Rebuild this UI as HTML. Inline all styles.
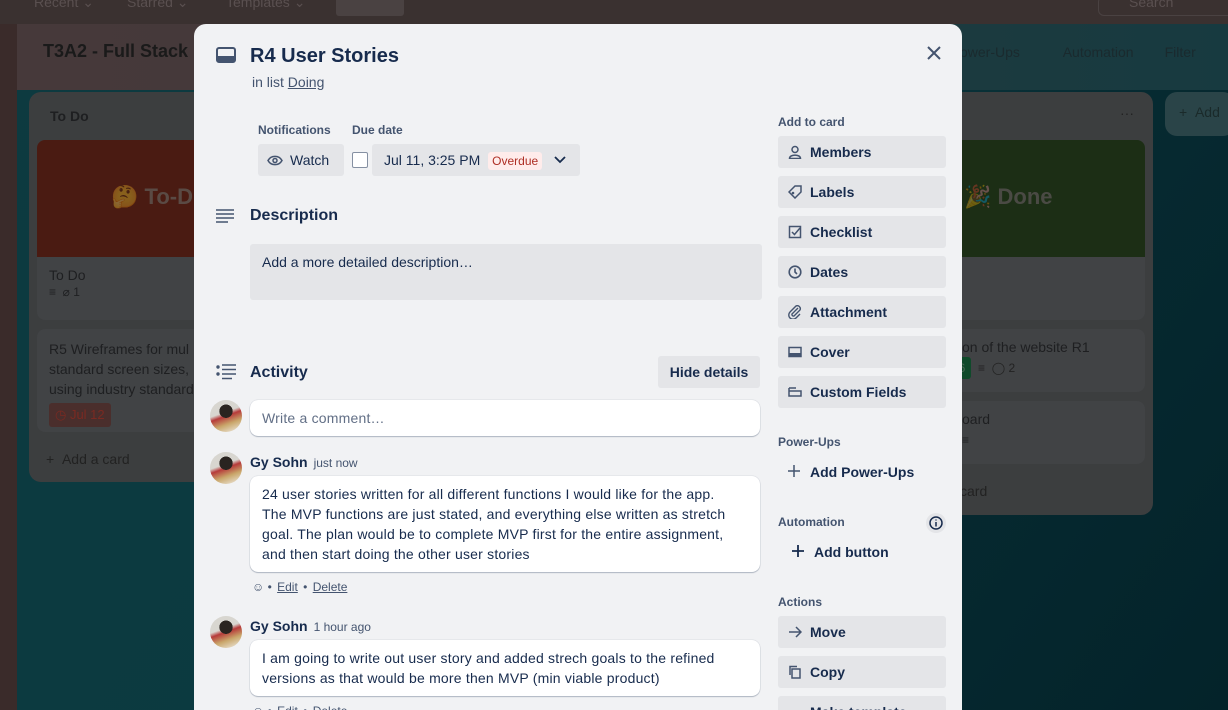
<!DOCTYPE html>
<html><head><meta charset="utf-8"><style>
*{box-sizing:border-box;margin:0;padding:0}
html,body{width:1228px;height:710px;overflow:hidden}
body{position:relative;font-family:"Liberation Sans",sans-serif;background:#06262c}
.a{position:absolute}
.bg{position:absolute;inset:0;background:linear-gradient(125deg,#0d3a40 0%,#0b3a40 45%,#062a31 70%,#04232a 100%)}
.hdr{left:17px;top:24px;width:1211px;height:66px;background:linear-gradient(90deg,#46393a 0%,#43393a 45%,#1e3a3e 65%,#173a40 100%)}
.top{left:0;top:0;width:1228px;height:24px;background:#3a3130;color:#5a5050;font-size:14px}
.side{left:0;top:24px;width:17px;height:686px;background:#3a2b2a}
.list{background:#3c3e3f;border-radius:12px}
.card{background:#414345;border-radius:8px;color:#1e1f21;font-size:14px}
.modal{left:194px;top:24px;width:768px;height:686px;background:#f1f2f4;border-radius:12px 12px 0 0;color:#172b4d;overflow:hidden}
.btn{position:absolute;background:#e4e5e8;border-radius:3px;font-size:14px;font-weight:bold;color:#172b4d;height:32px;line-height:32px}
.sb{left:584px;width:168px;padding-left:32px}
.sb svg{position:absolute;left:10px;top:9px}
.lbl{position:absolute;font-size:12px;font-weight:bold;color:#44546f}
.cm{position:absolute;left:56px;width:510px;background:#fff;border-radius:8px;box-shadow:0 1px 1px #091e4240,0 0 1px #091e424f;font-size:14px;line-height:20px;padding:8px 22px 8px 12px;color:#172b4d;letter-spacing:0.2px}
.av{position:absolute;left:16px;width:32px;height:32px;border-radius:50%;background:radial-gradient(circle at 50% 35%,#2a2420 0 25%,transparent 26%),linear-gradient(160deg,#d8d6d0 0 40%,#b63a3a 50%,#c9a66a 70%,#f2f0ea 100%)}
.nm{position:absolute;left:56px;font-size:14px;font-weight:bold}
.nm span{font-weight:normal;font-size:12px;color:#44546f;margin-left:6px}
.ft{position:absolute;left:58px;font-size:12px;color:#44546f}
.ft u{margin:0 2px}
.dim{opacity:.35}
</style></head><body>
<div class="bg"></div>
<div class="a hdr"></div>
<div class="a top"><span class="a" style="left:34px;top:-6px">Recent ⌄</span><span class="a" style="left:127px;top:-6px">Starred ⌄</span><span class="a" style="left:226px;top:-6px">Templates ⌄</span><div class="a" style="left:336px;top:-4px;width:68px;height:20px;background:#4a4242;border-radius:3px"></div><div class="a" style="left:1098px;top:-4px;width:140px;height:20px;border:1px solid #4a4242;border-radius:6px"><span class="a" style="left:30px;top:-3px;color:#5a5050">Search</span></div></div>
<div class="a side"></div>
<div class="a" style="left:43px;top:41px;font-size:18px;font-weight:bold;color:#1a1a1a">T3A2 - Full Stack</div>
<div class="a" style="left:960px;top:44px;font-size:14px;color:#1a2a2e;white-space:nowrap">ower-Ups &nbsp;&nbsp;&nbsp;&nbsp;&nbsp;&nbsp;&nbsp;&nbsp;&nbsp;&nbsp;Automation &nbsp;&nbsp;&nbsp;&nbsp;&nbsp;&nbsp;&nbsp;Filter</div>
<div class="a list" style="left:29px;top:92px;width:180px;height:390px"></div>
<div class="a" style="left:50px;top:108px;font-size:14px;font-weight:bold;color:#1e1f21">To Do</div>
<div class="a" style="left:37px;top:140px;width:165px;height:180px;background:#414345;border-radius:8px;overflow:hidden"><div style="height:117px;background:#4a1b12;color:#5a4a44;font-size:22px;font-weight:bold;padding:44px 0 0 74px;white-space:nowrap"><span class="dim">🤔</span> To-D</div><div style="padding:10px 12px;color:#1e1f21;font-size:14px">To Do<br><span style="font-size:12px">≡ &nbsp;⌀ 1</span></div></div>
<div class="a card" style="left:37px;top:329px;width:165px;height:103px;padding:10px 12px;line-height:20px;white-space:nowrap;overflow:hidden">R5 Wireframes for mul<br>standard screen sizes,<br>using industry standard<div style="margin-top:4px;width:62px;height:24px;background:#4a2e2c;color:#7a2a22;border-radius:3px;font-size:13px;padding:2px 6px">◷ Jul 12</div></div>
<div class="a" style="left:46px;top:451px;font-size:14px;color:#222">+ &nbsp;Add a card</div>
<div class="a list" style="left:940px;top:92px;width:213px;height:423px"></div>
<div class="a" style="left:1120px;top:105px;color:#222;font-size:14px">···</div>
<div class="a" style="left:940px;top:140px;width:205px;height:180px;background:#414345;border-radius:8px;overflow:hidden"><div style="height:117px;background:#1c2e15;color:#4a4a44;font-size:22px;font-weight:bold;padding:44px 0 0 24px"><span class="dim">🎉</span> Done</div></div>
<div class="a card" style="left:940px;top:329px;width:205px;height:63px;padding:10px 22px">on of the website R1<div style="margin:6px 0 0 -22px;font-size:12px;color:#222"><span style="background:#0f4a2a;color:#4a6a55;padding:4px 6px;border-radius:3px">ul 6</span> &nbsp;≡ &nbsp;◯ 2</div></div>
<div class="a card" style="left:940px;top:401px;width:205px;height:63px;padding:10px 22px">oard<div style="font-size:12px;margin-top:6px">≡</div></div>
<div class="a" style="left:960px;top:483px;font-size:14px;color:#222">card</div>
<div class="a" style="left:1165px;top:92px;width:70px;height:44px;background:#2a4448;border-radius:12px;color:#1a2a2a;font-size:14px;padding:12px 14px">+ &nbsp;Add</div>

<div class="a modal">
<svg class="a" style="left:22px;top:23px" width="20" height="16" viewBox="0 0 20 16"><rect x="1" y="1" width="18" height="14" rx="2" fill="none" stroke="#44546f" stroke-width="2"/><rect x="1" y="9" width="18" height="6" fill="#44546f"/></svg>
<div class="a" style="left:56px;top:21px;font-size:20px;font-weight:bold">R4 User Stories</div>
<div class="a" style="left:58px;top:50px;font-size:14px;color:#44546f">in list <u>Doing</u></div>
<svg class="a" style="left:732px;top:21px" width="16" height="16"><path d="M2 2L14 14M14 2L2 14" stroke="#44546f" stroke-width="2"/></svg>
<div class="lbl" style="left:64px;top:99px">Notifications</div>
<div class="lbl" style="left:158px;top:99px">Due date</div>
<div class="btn" style="left:64px;top:120px;width:86px;padding-left:32px;font-weight:normal">Watch<svg class="a" style="left:9px;top:11px" width="16" height="11"><path d="M1 5.5C4 0 12 0 15 5.5C12 11 4 11 1 5.5Z" fill="none" stroke="#44546f" stroke-width="1.5"/><circle cx="8" cy="5.5" r="2" fill="none" stroke="#44546f" stroke-width="1.5"/></svg></div>
<div class="a" style="left:158px;top:128px;width:16px;height:16px;border:1.5px solid #8590a2;border-radius:2px;background:#fff"></div>
<div class="btn" style="left:178px;top:120px;width:208px;padding-left:12px;font-weight:normal;font-size:14px;color:#172b4d">Jul 11, 3:25 PM <span style="background:#ffeceb;color:#ae2e24;font-size:12px;padding:2px 4px;border-radius:3px;margin-left:4px">Overdue</span><svg class="a" style="left:182px;top:12px" width="12" height="8"><path d="M1 1L6 6L11 1" stroke="#172b4d" stroke-width="1.8" fill="none"/></svg></div>
<svg class="a" style="left:22px;top:185px" width="18" height="14"><path d="M0 1H18M0 5H18M0 9H18M0 13H12" stroke="#44546f" stroke-width="1.6"/></svg>
<div class="a" style="left:56px;top:183px;font-size:16px;font-weight:bold">Description</div>
<div class="a" style="left:56px;top:220px;width:512px;height:56px;background:#e4e5e8;border-radius:3px;font-size:14px;padding:10px 12px">Add a more detailed description…</div>
<svg class="a" style="left:22px;top:340px" width="20" height="16"><circle cx="2" cy="3" r="1.7" fill="#44546f"/><circle cx="2" cy="10" r="1.7" fill="#44546f"/><path d="M6 1H20M6 5.5H20M6 10H20M6 14.5H16" stroke="#44546f" stroke-width="1.6"/></svg>
<div class="a" style="left:56px;top:340px;font-size:16px;font-weight:bold">Activity</div>
<div class="btn" style="left:464px;top:332px;width:102px;text-align:center;font-size:14px">Hide details</div>
<div class="av" style="top:376px"></div>
<div class="cm" style="top:376px;height:36px;color:#626f86">Write a comment…</div>
<div class="av" style="top:428px"></div>
<div class="nm" style="top:430px">Gy Sohn<span>just now</span></div>
<div class="cm" style="top:452px;height:96px">24 user stories written for all different functions I would like for the app.<br>The MVP functions are just stated, and everything else written as stretch<br>goal. The plan would be to complete MVP first for the entire assignment,<br>and then start doing the other user stories</div>
<div class="ft" style="top:556px">☺ • <u>Edit</u> • <u>Delete</u></div>
<div class="av" style="top:592px"></div>
<div class="nm" style="top:594px">Gy Sohn<span>1 hour ago</span></div>
<div class="cm" style="top:616px;height:56px">I am going to write out user story and added strech goals to the refined<br>versions as that would be more then MVP (min viable product)</div>
<div class="ft" style="top:680px">☺ • <u>Edit</u> • <u>Delete</u></div>

<div class="lbl" style="left:584px;top:91px">Add to card</div>
<div class="btn sb" style="top:112px"><svg width="14" height="14"><circle cx="7" cy="4.5" r="3" fill="none" stroke="#44546f" stroke-width="1.5"/><path d="M1.5 13.5C1.5 9 12.5 9 12.5 13.5Z" fill="none" stroke="#44546f" stroke-width="1.5"/></svg>Members</div>
<div class="btn sb" style="top:152px"><svg width="14" height="14"><path d="M1 7L7 1H13V7L7 13Z" fill="none" stroke="#44546f" stroke-width="1.5"/><circle cx="5" cy="8" r="1.3" fill="#44546f"/></svg>Labels</div>
<div class="btn sb" style="top:192px"><svg width="14" height="14"><rect x="1.5" y="1.5" width="11" height="11" fill="none" stroke="#44546f" stroke-width="1.5"/><path d="M4 7L6.5 9.5L12 3" fill="none" stroke="#44546f" stroke-width="1.5"/></svg>Checklist</div>
<div class="btn sb" style="top:232px"><svg width="14" height="14"><circle cx="7" cy="7" r="5.8" fill="none" stroke="#44546f" stroke-width="1.6"/><path d="M7 3.5V7L9 9" fill="none" stroke="#44546f" stroke-width="1.6"/></svg>Dates</div>
<div class="btn sb" style="top:272px"><svg width="14" height="14"><path d="M10 3L4 9A1.6 1.6 0 0 0 6 11L12 5A3 3 0 0 0 8 1L2 7A4 4 0 0 0 8 13L12 9" fill="none" stroke="#44546f" stroke-width="1.4"/></svg>Attachment</div>
<div class="btn sb" style="top:312px"><svg width="14" height="14"><rect x="1" y="2.5" width="12" height="9" fill="none" stroke="#44546f" stroke-width="1.5"/><rect x="1" y="8" width="12" height="3.5" fill="#44546f"/></svg>Cover</div>
<div class="btn sb" style="top:352px"><svg width="14" height="14"><path d="M1 3H8M1 3V11H13V6H1" fill="none" stroke="#44546f" stroke-width="1.5"/></svg>Custom Fields</div>
<div class="lbl" style="left:584px;top:411px">Power-Ups</div>
<div class="a" style="left:616px;top:440px;font-size:14px;font-weight:bold">Add Power-Ups</div>
<svg class="a" style="left:594px;top:441px" width="12" height="12"><path d="M6 0V12M0 6H12" stroke="#44546f" stroke-width="1.5"/></svg>
<div class="lbl" style="left:584px;top:491px">Automation</div>
<div class="a" style="left:732px;top:489px;width:20px;height:20px;border-radius:50%;background:#e4e5e8"><svg width="20" height="20"><circle cx="10" cy="10" r="6" fill="none" stroke="#172b4d" stroke-width="1.5"/><path d="M10 9V13.5M10 6.5V7.5" stroke="#172b4d" stroke-width="1.5"/></svg></div>
<svg class="a" style="left:598px;top:521px" width="12" height="12"><path d="M6 0V12M0 6H12" stroke="#172b4d" stroke-width="1.8"/></svg>
<div class="a" style="left:620px;top:520px;font-size:14px;font-weight:bold">Add button</div>
<div class="lbl" style="left:584px;top:571px">Actions</div>
<div class="btn sb" style="top:592px"><svg width="14" height="14"><path d="M1 7H13M8 2L13 7L8 12" fill="none" stroke="#44546f" stroke-width="1.5"/></svg>Move</div>
<div class="btn sb" style="top:632px"><svg width="14" height="14"><rect x="4" y="4" width="8" height="9" fill="none" stroke="#44546f" stroke-width="1.5"/><path d="M2 10V1.5H9" fill="none" stroke="#44546f" stroke-width="1.5"/></svg>Copy</div>
<div class="btn sb" style="top:672px">Make template</div>
</div>
</body></html>
